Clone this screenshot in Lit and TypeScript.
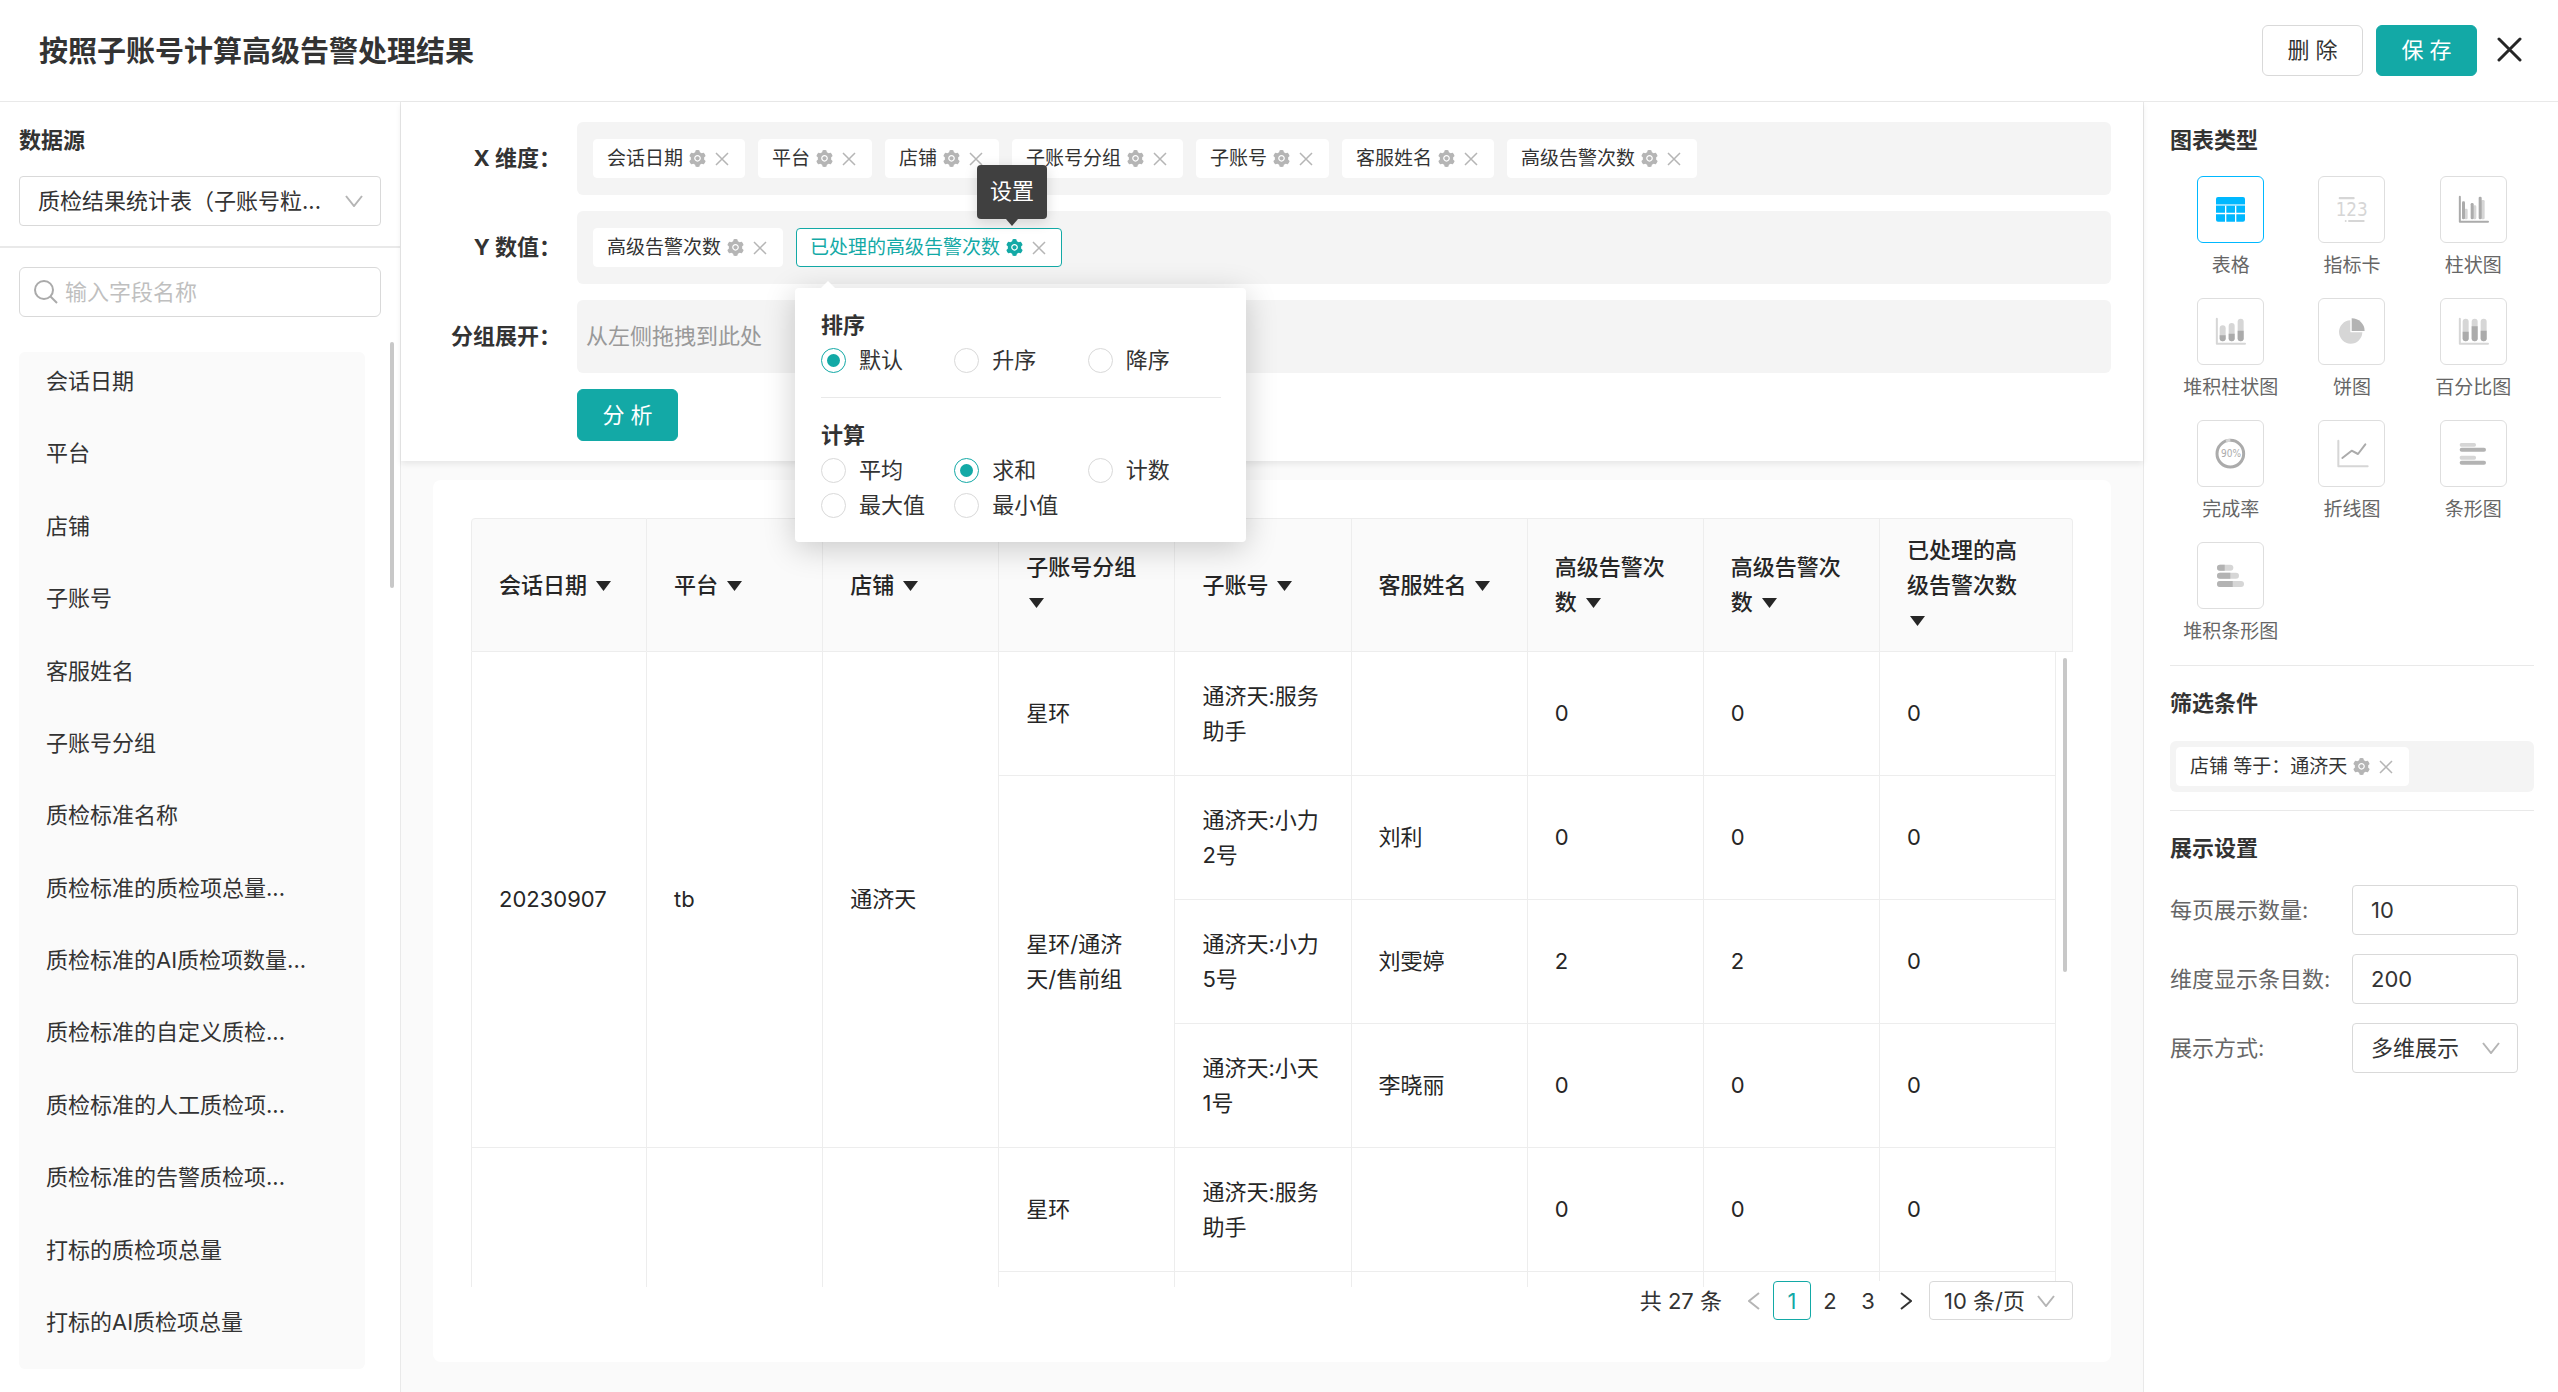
import { LitElement, html, svg, css, nothing } from "lit";
import { customElement, state } from "lit/decorators.js";
import { classMap } from "lit/directives/class-map.js";

const FIELDS = [
  "会话日期",
  "平台",
  "店铺",
  "子账号",
  "客服姓名",
  "子账号分组",
  "质检标准名称",
  "质检标准的质检项总量...",
  "质检标准的AI质检项数量...",
  "质检标准的自定义质检...",
  "质检标准的人工质检项...",
  "质检标准的告警质检项...",
  "打标的质检项总量",
  "打标的AI质检项总量",
];

const X_FIELDS = ["会话日期", "平台", "店铺", "子账号分组", "子账号", "客服姓名", "高级告警次数"];

const COLUMNS = [
  "会话日期",
  "平台",
  "店铺",
  "子账号分组",
  "子账号",
  "客服姓名",
  "高级告警次数",
  "高级告警次数",
  "已处理的高级告警次数",
];

type Cell = { text: string; span?: number };
const cell = (text: string, span?: number): Cell => ({ text, span });

const ROWS: Cell[][] = [
  [cell("20230907", 4), cell("tb", 4), cell("通济天", 4), cell("星环"), cell("通济天:服务助手"), cell(""), cell("0"), cell("0"), cell("0")],
  [cell("星环/通济天/售前组", 3), cell("通济天:小力2号"), cell("刘利"), cell("0"), cell("0"), cell("0")],
  [cell("通济天:小力5号"), cell("刘雯婷"), cell("2"), cell("2"), cell("0")],
  [cell("通济天:小天1号"), cell("李晓丽"), cell("0"), cell("0"), cell("0")],
  [cell("", 2), cell("", 2), cell("", 2), cell("星环"), cell("通济天:服务助手"), cell(""), cell("0"), cell("0"), cell("0")],
  [cell(""), cell(""), cell(""), cell(""), cell(""), cell("")],
];

const DARK = "#ababab";
const LIGHT = "#d6d6d6";

const column = (x: number, top: number, split: number) => svg`
  <rect x=${x} y=${top} width="18" height=${130 - top} rx="9" fill=${LIGHT} />
  <path d="M${x} ${split}h18V121a9 9 0 0 1-18 0z" fill=${DARK} />`;

const bar = (y: number, right: number, split: number) => svg`
  <rect x="60" y=${y} width=${right - 60} height="18" rx="9" fill=${LIGHT} />
  <path d="M${split} ${y}v18H69a9 9 0 0 1 0-18z" fill="#b3b3b3" />`;

const axis = (color: string) => svg`
  <path d="M59.500 62V137H144" fill="none" stroke=${color} stroke-width="6" stroke-linecap="round" stroke-linejoin="round" />`;

const CHARTS = [
  {
    label: "表格",
    icon: svg`<g fill="#00b8ff">
      <path d="M57 84V69a6 6 0 0 1 6-6h75a6 6 0 0 1 6 6v15z" />
      <rect x="57" y="84" width="87" height="5" opacity=".45" />
      <path d="M57 89h27v21H57zM88 89h26v21H88zM118 89h26v21h-26zM57 115h27v22H63a6 6 0 0 1-6-6zM88 115h26v22H88zM118 115h26v16a6 6 0 0 1-6 6h-20z" />
    </g>`,
  },
  {
    label: "指标卡",
    icon: svg`<g fill=${LIGHT}>
      <rect x="62" y="63" width="48" height="7" rx="3" />
      <text class="digits" x="101" y="121" text-anchor="middle" font-size="56">123</text>
      <rect x="80" y="132" width="6" height="6" rx="3" />
      <rect x="90" y="132" width="50" height="6" rx="3" />
    </g>`,
  },
  {
    label: "柱状图",
    icon: svg`${axis(DARK)}
      <g fill=${LIGHT}>
        <rect x="73" y="98" width="10" height="32" rx="4" />
        <rect x="99" y="88" width="10" height="42" rx="4" />
        <rect x="123" y="72" width="11" height="58" rx="4" />
      </g>
      <g fill=${DARK}>
        <rect x="66" y="76" width="9" height="54" rx="4" />
        <rect x="92" y="81" width="9" height="49" rx="4" />
        <rect x="116" y="62" width="9" height="68" rx="4" />
      </g>`,
  },
  { label: "堆积柱状图", icon: svg`${axis(LIGHT)}${column(68, 82, 112)}${column(95, 75, 107)}${column(122, 62, 98)}` },
  {
    label: "饼图",
    icon: svg`
      <path d="M97 67A35 35 0 1 0 133 103H97z" fill=${LIGHT} />
      <path d="M101 61A39 38 0 0 1 140 99H101z" fill="#b3b3b3" />`,
  },
  { label: "百分比图", icon: svg`${axis(LIGHT)}${column(68, 62, 101)}${column(95, 62, 85)}${column(122, 62, 98)}` },
  {
    label: "完成率",
    icon: svg`
      <circle cx="100" cy="101" r="40" fill="none" stroke=${DARK} stroke-width="9" />
      <path d="M87 63A40 40 0 0 1 100 61" fill="none" stroke=${LIGHT} stroke-width="9" />
      <text class="digits" x="102" y="112" text-anchor="middle" font-size="30" fill=${DARK}>90%</text>`,
  },
  {
    label: "折线图",
    icon: svg`
      <path d="M61 62V139H149" fill="none" stroke=${LIGHT} stroke-width="6" stroke-linecap="round" stroke-linejoin="round" />
      <path d="M73 114L101 92L120 102L142 73" fill="none" stroke=${DARK} stroke-width="6" stroke-linecap="round" stroke-linejoin="round" />`,
  },
  {
    label: "条形图",
    icon: svg`
      <rect x="59" y="69" width="49" height="11" rx="5" fill=${LIGHT} />
      <rect x="59" y="83" width="79" height="12" rx="6" fill="#b3b3b3" />
      <rect x="59" y="107" width="49" height="12" rx="5" fill=${LIGHT} />
      <rect x="59" y="122" width="79" height="12" rx="6" fill="#b3b3b3" />`,
  },
  { label: "堆积条形图", icon: svg`${bar(68, 109, 83)}${bar(92, 126, 100)}${bar(117, 141, 107)}` },
];

const gearIcon = html`<svg class="gear" viewBox="64 64 896 896" aria-hidden="true"><path d="M512.5 390.6c-29.9 0-57.9 11.6-79.1 32.8-21.1 21.2-32.8 49.2-32.8 79.1 0 29.9 11.7 57.9 32.8 79.1 21.2 21.1 49.2 32.8 79.1 32.8 29.9 0 57.9-11.7 79.1-32.8 21.1-21.2 32.8-49.2 32.8-79.1 0-29.9-11.7-57.9-32.8-79.1a110.96 110.96 0 0 0-79.1-32.8zm412.3 235.5l-65.4-55.9c3.1-19 4.7-38.4 4.7-57.7s-1.6-38.8-4.7-57.7l65.4-55.9a32.03 32.03 0 0 0 9.3-35.2l-.9-2.6a442.5 442.5 0 0 0-79.6-137.7l-1.8-2.1a32.12 32.12 0 0 0-35.1-9.5l-81.2 28.9c-30-24.6-63.4-44-99.6-57.5l-15.7-84.9a32.05 32.05 0 0 0-25.8-25.7l-2.7-.5c-52-9.4-106.8-9.4-158.8 0l-2.7.5a32.05 32.05 0 0 0-25.8 25.7l-15.8 85.3a353.44 353.44 0 0 0-98.9 57.3l-81.8-29.1a32 32 0 0 0-35.1 9.5l-1.8 2.1a445.93 445.93 0 0 0-79.6 137.7l-.9 2.6c-4.5 12.500-.8 26.500 9.3 35.2l66.2 56.5c-3.1 18.8-4.6 38-4.6 57 0 19.2 1.5 38.4 4.6 57l-66 56.5a32.03 32.03 0 0 0-9.3 35.2l.9 2.6c18.1 50.3 44.8 96.8 79.6 137.7l1.8 2.1a32.12 32.12 0 0 0 35.1 9.5l81.8-29.1c29.8 24.5 63 43.9 98.9 57.3l15.8 85.3a32.05 32.05 0 0 0 25.8 25.7l2.7.5a448.27 448.27 0 0 0 158.8 0l2.7-.5a32.05 32.05 0 0 0 25.8-25.7l15.7-84.9c36.2-13.6 69.6-32.9 99.6-57.5l81.2 28.9a32 32 0 0 0 35.1-9.5l1.8-2.1c34.8-41.1 61.5-87.4 79.6-137.7l.9-2.6c4.3-12.4.6-26.3-9.5-35zm-412.3 52.2c-97.1 0-175.8-78.7-175.8-175.8s78.7-175.8 175.8-175.8 175.8 78.7 175.8 175.8-78.7 175.8-175.8 175.8z" /></svg>`;

const crossIcon = html`<svg class="cross" viewBox="0 0 14 14" aria-hidden="true"><path d="M1 1L13 13M13 1L1 13" /></svg>`;
const chevronIcon = html`<svg class="chevron" viewBox="0 0 18 12" aria-hidden="true"><path d="M1 1L9 11L17 1" /></svg>`;

@customElement("app-root")
export class AppRoot extends LitElement {
  @state() private chart = "表格";
  @state() private page = 1;

  static styles = css`
    :host {
      display: block;
      --teal: #13a9a6;
      --line: #e9e9e9;
      --field: #d9d9d9;
      --text: #333;
      --muted: #666;
      --faint: #b5b5b5;
      color: var(--text);
      font: 22px/35px Inter, "Noto Sans CJK SC", sans-serif;
    }
    *, *::before, *::after { box-sizing: border-box; }
    h1, h2, ul, fieldset { margin: 0; padding: 0; border: 0; list-style: none; }
    button, input, select { font: inherit; color: inherit; margin: 0; }
    button { padding: 0; border: 0; background: none; cursor: pointer; }
    svg { display: block; flex: none; }
    .shell { display: flex; flex-direction: column; height: 100vh; background: #fff; overflow: hidden; }
    .columns { display: flex; flex: 1; min-height: 0; }

    .topbar {
      display: flex; align-items: center; gap: 13px;
      padding: 25px 36px 25px 39px; border-bottom: 1px solid var(--line);
    }
    .topbar h1 { flex: 1; padding-top: 2px; font-size: 29px; font-weight: 700; line-height: 49px; }
    .btn { width: 101px; height: 51px; border: 1px solid var(--field); border-radius: 6px; background: #fff; }
    .btn.primary { border-color: var(--teal); background: var(--teal); color: #fff; }
    .close { margin: 0 0 3px 7px; }
    .close svg { width: 25px; height: 25px; fill: none; stroke: #262626; stroke-width: 3; stroke-linecap: round; }
    h2 { font-size: 22px; font-weight: 700; line-height: 35px; }

    .sidebar {
      position: relative; display: flex; flex-direction: column; flex: none;
      width: 401px; border-right: 1px solid var(--line);
    }
    .source { padding: 21px 19px 20px; border-bottom: 2px solid var(--line); }
    .select { position: relative; display: flex; align-items: center; }
    .select select, .input {
      width: 100%; height: 50px; padding: 0 18px; border: 1px solid var(--field); border-radius: 4px;
      background: #fff; appearance: none; outline: 0;
    }
    .chevron { position: absolute; right: 18px; width: 18px; height: 12px; pointer-events: none; fill: none; stroke: var(--faint); stroke-width: 2; }
    .source .select { margin-top: 18px; }
    .search {
      display: flex; align-items: center; gap: 7px; height: 50px; margin: 19px 19px 35px; padding: 0 14px;
      border: 1px solid var(--field); border-radius: 6px;
    }
    .search svg { width: 24px; height: 24px; fill: none; stroke: #aaa; stroke-width: 2; }
    .search input { flex: 1; min-width: 0; border: 0; padding: 0; outline: 0; background: none; }
    .search input::placeholder { color: #bfbfbf; opacity: 1; }
    .fields {
      display: flex; flex: 1; min-height: 0; flex-direction: column; justify-content: space-between;
      margin: 0 35px 23px 19px; padding: 0 27px 18px; border-radius: 6px; background: #fafafa;
    }
    .fields li { line-height: 58px; white-space: nowrap; }
    .thumb { position: absolute; width: 4px; border-radius: 2px; background: #c8c8c8; }
    .sidebar .thumb { top: 240px; right: 6px; height: 246px; }

    .main { display: flex; flex: 1; min-width: 0; flex-direction: column; background: #fafafa; }
    .query {
      position: relative; z-index: 1; display: grid; grid-template-columns: 160px 1fr; gap: 16px;
      padding: 20px 32px 20px 0; background: #fff; box-shadow: 0 3px 6px rgba(0, 0, 0, 0.08);
    }
    .query h2 { align-self: center; text-align: right; }
    .drop { display: flex; align-items: center; gap: 13px; height: 73px; padding: 0 16px; border-radius: 6px; background: #f4f4f4; }
    .drop.empty { padding: 0 9px; color: #999; }
    .query .btn { grid-column: 2; height: 52px; }
    .chip {
      position: relative; display: flex; align-items: center; height: 39px; padding: 0 15px 0 13px;
      border: 1px solid #fff; border-radius: 4px; background: #fff; font-size: 19px; white-space: nowrap;
    }
    .chip.active { border-color: var(--teal); color: var(--teal); }
    .chip button { color: var(--faint); }
    .chip.active .set { color: var(--teal); }
    .set { margin: 0 9px 0 6px; }
    .gear { width: 17px; height: 17px; fill: currentColor; }
    .cross { width: 14px; height: 14px; fill: none; stroke: var(--faint); stroke-width: 1.500; }
    .tooltip {
      position: absolute; right: 14px; bottom: 47px; padding: 9px 13px 10px; border-radius: 4px;
      background: #404040; color: #fff; font-size: 22px; line-height: 35px; box-shadow: 0 3px 13px rgba(0, 0, 0, 0.15);
    }
    .tooltip::after {
      content: ""; position: absolute; top: 100%; left: 50%; margin-left: -6px;
      border: 6px solid transparent; border-top: 7px solid #404040; border-bottom: 0;
    }
    .popover {
      position: absolute; top: 59px; left: -2px; width: 451px; padding: 20px 25px 19px 26px; border-radius: 4px;
      background: #fff; color: var(--text); font-size: 22px; box-shadow: 0 6px 32px rgba(0, 0, 0, 0.2);
    }
    .popover::before {
      content: ""; position: absolute; bottom: 100%; left: 26px;
      border: 7px solid transparent; border-bottom: 7px solid #fff; border-top: 0;
    }
    .popover legend { padding: 0; font-weight: 700; }
    .popover fieldset + fieldset { margin-top: 19px; padding-top: 20px; border-top: 1px solid var(--line); }
    .popover fieldset + fieldset legend { float: left; width: 100%; }
    .options { display: grid; grid-template-columns: repeat(3, 1fr); clear: both; }
    .options label { display: flex; align-items: center; gap: 13px; }
    .options input {
      display: grid; place-items: center; flex: none; width: 25px; height: 25px; appearance: none;
      border: 1px solid var(--field); border-radius: 50%; background: #fff;
    }
    .options input:checked { border-color: var(--teal); }
    .options input:checked::before { content: ""; width: 13px; height: 13px; border-radius: 50%; background: var(--teal); }

    .card {
      display: flex; flex: 1; min-height: 0; flex-direction: column; margin: 19px 32px 30px;
      padding: 38px 38px 42px; border-radius: 8px; background: #fff;
    }
    .grid { position: relative; flex: 1; min-height: 0; overflow: hidden; }
    .grid .thumb { top: 140px; right: 6px; height: 314px; }
    table { width: 100%; table-layout: fixed; border-collapse: separate; border-spacing: 0; color: #262626; }
    .gutter { width: 17px; }
    th, td { padding: 0 26px 0 27px; border: 0 solid #ededed; border-width: 0 1px 1px 0; text-align: left; overflow-wrap: anywhere; }
    th { height: 134px; border-top-width: 1px; background: #fafafa; font-weight: 500; }
    th.lead, td.lead { border-left-width: 1px; }
    th.last { border-right-width: 0; padding-right: 27px; }
    th.lead { border-top-left-radius: 4px; }
    th.edge { padding: 0; border-top-right-radius: 4px; }
    td { height: 124px; }
    .sort { display: inline-block; vertical-align: -3px; }
    .sort svg { width: 21px; height: 21px; fill: #262626; }

    .pager { position: relative; display: flex; justify-content: flex-end; align-items: center; margin-top: -6px; line-height: 36px; }
    .pager > span { margin-right: 13px; }
    .pager button { display: grid; place-items: center; width: 38px; height: 39px; border: 1px solid transparent; border-radius: 4px; background: #fff; }
    .pager button.current { border-color: var(--teal); color: var(--teal); }
    .pager button svg { width: 12px; height: 18px; fill: none; stroke: currentColor; stroke-width: 2; }
    .pager button:disabled { color: var(--faint); }
    .pager .select { width: 144px; margin-left: 4px; }
    .pager .select select { height: 39px; padding: 0 14px; }

    .panel { flex: none; width: 415px; padding: 21px 24px 0 26px; border-left: 1px solid var(--line); }
    .panel section + section { margin-top: 18px; padding-top: 20px; border-top: 1px solid var(--line); }
    .charts { display: grid; grid-template-columns: repeat(3, 1fr); row-gap: 17px; margin-top: 18px; }
    .chart { display: flex; flex-direction: column; align-items: center; gap: 8px; color: var(--muted); font-size: 19px; line-height: 30px; white-space: nowrap; }
    .tile { display: block; border: 1px solid #dedede; border-radius: 6px; }
    .tile svg { width: 65px; height: 65px; }
    .chart.on .tile { border-color: #00b8ff; }
    .digits { font-family: "Liberation Sans Narrow", "DejaVu Sans Condensed", Roboto, sans-serif; }
    .filter { display: flex; margin-top: 20px; padding: 6px; border-radius: 6px; background: #f4f4f4; }
    .settings { display: grid; grid-template-columns: 1fr 166px; row-gap: 19px; align-items: center; margin-top: 19px; padding-right: 16px; }
    .settings label { color: var(--muted); white-space: nowrap; }
  `;

  private chip(text: string, active = false) {
    return html`<div class=${classMap({ chip: true, active })}>
      <span>${text}</span>
      <button class="set" aria-label="设置">${gearIcon}</button>
      <button aria-label="移除">${crossIcon}</button>
      ${active
        ? html`<div class="tooltip" role="tooltip">设置</div>
            <div class="popover">
              ${this.options("sort", "排序", ["默认", "升序", "降序"], "默认")}
              ${this.options("calc", "计算", ["平均", "求和", "计数", "最大值", "最小值"], "求和")}
            </div>`
        : nothing}
    </div>`;
  }

  private options(name: string, title: string, items: string[], chosen: string) {
    return html`<fieldset>
      <legend>${title}</legend>
      <div class="options">
        ${items.map(
          (item) => html`<label><input type="radio" name=${name} ?checked=${item === chosen} />${item}</label>`,
        )}
      </div>
    </fieldset>`;
  }

  private renderSidebar() {
    return html`<aside class="sidebar">
      <div class="source">
        <h2>数据源</h2>
        <div class="select">
          <select aria-label="数据源"><option>质检结果统计表（子账号粒...</option></select>
          ${chevronIcon}
        </div>
      </div>
      <label class="search">
        <svg viewBox="0 0 24 24" aria-hidden="true"><circle cx="10" cy="10" r="9" /><path d="M16.500 16.500L23 23" /></svg>
        <input type="text" placeholder="输入字段名称" />
      </label>
      <ul class="fields">${FIELDS.map((field) => html`<li>${field}</li>`)}</ul>
      <div class="thumb"></div>
    </aside>`;
  }

  private renderTable() {
    return html`<div class="grid">
      <table>
        <colgroup>${COLUMNS.map(() => html`<col />`)}<col class="gutter" /></colgroup>
        <thead>
          <tr>
            ${COLUMNS.map(
              (name, i) => html`<th class=${classMap({ lead: i === 0, last: i === COLUMNS.length - 1 })}>${name} <button class="sort" aria-label="排序"><svg viewBox="0 0 21 21"><path d="M3 6h15L10.500 16z" /></svg></button></th>`,
            )}
            <th class="edge"></th>
          </tr>
        </thead>
        <tbody>
          ${ROWS.map(
            (row) => html`<tr>
              ${row.map(
                (c, i) => html`<td class=${classMap({ lead: i === 0 && row.length === COLUMNS.length })} rowspan=${c.span ?? 1}>${c.text}</td>`,
              )}
            </tr>`,
          )}
        </tbody>
      </table>
      <div class="thumb"></div>
    </div>`;
  }

  private renderPager() {
    return html`<nav class="pager">
      <span>共 27 条</span>
      <button aria-label="上一页" ?disabled=${this.page === 1} @click=${() => this.page--}>
        <svg viewBox="0 0 12 18"><path d="M11 1L1 9L11 17" /></svg>
      </button>
      ${[1, 2, 3].map(
        (n) => html`<button class=${classMap({ current: n === this.page })} @click=${() => (this.page = n)}>${n}</button>`,
      )}
      <button aria-label="下一页" ?disabled=${this.page === 3} @click=${() => this.page++}>
        <svg viewBox="0 0 12 18"><path d="M1 1L11 9L1 17" /></svg>
      </button>
      <div class="select">
        <select aria-label="每页条数"><option>10 条/页</option></select>
        ${chevronIcon}
      </div>
    </nav>`;
  }

  private renderPanel() {
    return html`<aside class="panel">
      <section>
        <h2>图表类型</h2>
        <div class="charts">
          ${CHARTS.map(
            (c) => html`<button class=${classMap({ chart: true, on: c.label === this.chart })} @click=${() => (this.chart = c.label)}>
              <span class="tile"><svg viewBox="3 3 195 195" aria-hidden="true">${c.icon}</svg></span>
              <span>${c.label}</span>
            </button>`,
          )}
        </div>
      </section>
      <section>
        <h2>筛选条件</h2>
        <div class="filter">${this.chip("店铺 等于：通济天")}</div>
      </section>
      <section>
        <h2>展示设置</h2>
        <div class="settings">
          <label for="page-size">每页展示数量:</label>
          <input class="input" id="page-size" type="text" value="10" />
          <label for="dim-count">维度显示条目数:</label>
          <input class="input" id="dim-count" type="text" value="200" />
          <label for="mode">展示方式:</label>
          <div class="select">
            <select id="mode"><option>多维展示</option></select>
            ${chevronIcon}
          </div>
        </div>
      </section>
    </aside>`;
  }

  render() {
    return html`<div class="shell">
      <header class="topbar">
        <h1>按照子账号计算高级告警处理结果</h1>
        <button class="btn">删 除</button>
        <button class="btn primary">保 存</button>
        <button class="close" aria-label="关闭">
          <svg viewBox="0 0 25 25"><path d="M2 2L23 23M23 2L2 23" /></svg>
        </button>
      </header>
      <div class="columns">
        ${this.renderSidebar()}
        <main class="main">
          <div class="query">
            <h2>X 维度：</h2>
            <div class="drop">${X_FIELDS.map((name) => this.chip(name))}</div>
            <h2>Y 数值：</h2>
            <div class="drop">${this.chip("高级告警次数")}${this.chip("已处理的高级告警次数", true)}</div>
            <h2>分组展开：</h2>
            <div class="drop empty">从左侧拖拽到此处</div>
            <button class="btn primary">分 析</button>
          </div>
          <div class="card">${this.renderTable()}${this.renderPager()}</div>
        </main>
        ${this.renderPanel()}
      </div>
    </div>`;
  }
}
